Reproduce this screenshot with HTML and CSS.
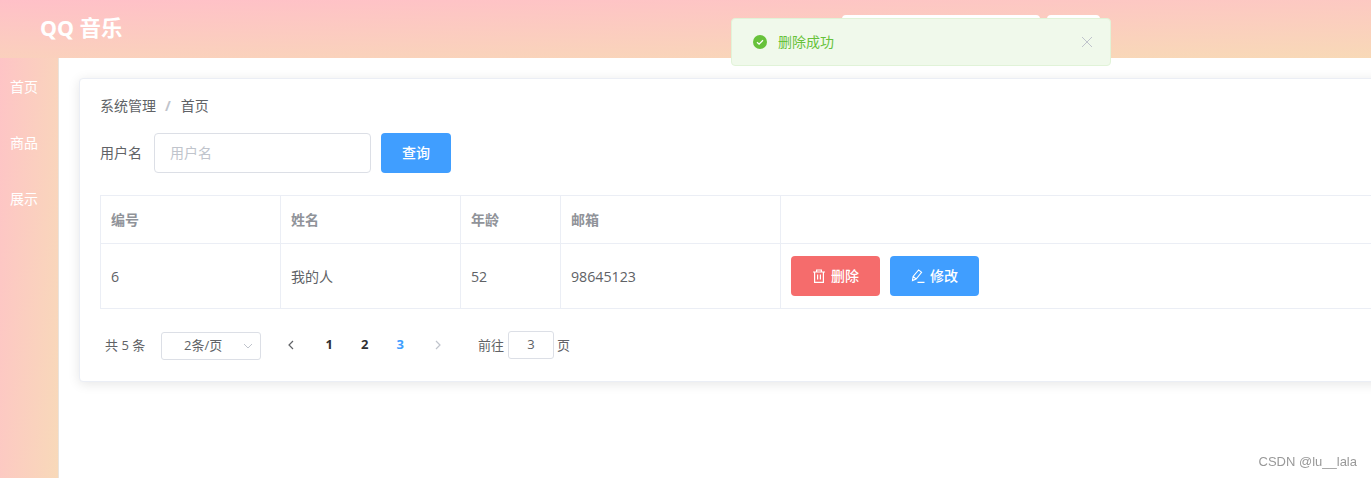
FILE: index.html
```html
<!DOCTYPE html>
<html lang="zh">
<head>
<meta charset="utf-8">
<title>QQ 音乐</title>
<link rel="stylesheet" href="styles.css">
</head>
<body>
<div class="app">
  <header class="header">
    <div class="logo">QQ 音乐</div>
    <div class="header-tools">
      <div class="search-box"></div>
      <div class="search-btn"></div>
    </div>
  </header>
  <div class="body">
    <aside class="sidebar">
      <a class="nav-item">首页</a>
      <a class="nav-item">商品</a>
      <a class="nav-item">展示</a>
    </aside>
    <main class="main">
      <section class="card">
        <nav class="breadcrumb"><span>系统管理</span><i class="sep">/</i><span>首页</span></nav>
        <form class="search-form">
          <label class="form-label">用户名</label>
          <div class="input"><span class="placeholder">用户名</span></div>
          <button type="button" class="btn btn-primary btn-query">查询</button>
        </form>
        <div class="table">
          <div class="row row-head">
            <div class="cell c1">编号</div>
            <div class="cell c2">姓名</div>
            <div class="cell c3">年龄</div>
            <div class="cell c4">邮箱</div>
            <div class="cell c5"></div>
          </div>
          <div class="row row-body">
            <div class="cell c1 num">6</div>
            <div class="cell c2">我的人</div>
            <div class="cell c3 num">52</div>
            <div class="cell c4 num">98645123</div>
            <div class="cell c5 actions">
              <button type="button" class="btn btn-danger btn-action">
                <svg class="icon" viewBox="0 0 14 14" fill="none" stroke="currentColor" stroke-width="1.2"><path d="M1 3h12M4.6 3V1h4.8v2M2.6 3v10.4h8.8V3M5.6 5.5v5M8.4 5.5v5"/></svg>
                <span>删除</span>
              </button>
              <button type="button" class="btn btn-primary btn-action">
                <svg class="icon" viewBox="0 0 14 14" fill="none" stroke="currentColor" stroke-width="1.1"><path d="M1.5 11.5l.6-4L7.6.9l3 2.5-5.5 6.6zM2.1 7.5l3 2.5M6.5 13.4h7"/></svg>
                <span>修改</span>
              </button>
            </div>
          </div>
        </div>
        <div class="pagination">
          <span class="total">共 5 条</span>
          <div class="page-size"><span class="size-text">2条/页</span>
            <svg class="chev-down" viewBox="0 0 12 12" fill="none" stroke="currentColor" stroke-width="1"><path d="M2 4l4 4 4-4"/></svg>
          </div>
          <svg class="pager-arrow prev" viewBox="0 0 12 12" fill="none" stroke="currentColor" stroke-width="1.2"><path d="M8 2L4 6l4 4"/></svg>
          <ul class="pager">
            <li>1</li>
            <li>2</li>
            <li class="active">3</li>
          </ul>
          <svg class="pager-arrow next" viewBox="0 0 12 12" fill="none" stroke="currentColor" stroke-width="1.2"><path d="M4 2l4 4-4 4"/></svg>
          <span class="jump">前往</span>
          <div class="jump-input">3</div>
          <span class="jump-end">页</span>
        </div>
      </section>
    </main>
  </div>
</div>
<div class="message">
  <svg class="msg-icon" viewBox="0 0 16 16"><circle cx="8" cy="8" r="7" fill="#67c23a"/><path d="M5 8.2l2.1 2 3.9-4" fill="none" stroke="#fff" stroke-width="1.3"/></svg>
  <span class="msg-text">删除成功</span>
  <svg class="msg-close" viewBox="0 0 12 12" fill="none" stroke="currentColor" stroke-width="1"><path d="M1 1l10 10M11 1L1 11"/></svg>
</div>
<div class="watermark">CSDN @lu__lala</div>
</body>
</html>
```

FILE: styles.css
```css
* { box-sizing: border-box; }
html, body { margin: 0; height: 100%; overflow: hidden; background: #fff; }
body { font-family: "Open Sans", "Noto Sans CJK SC", sans-serif; font-size: 14px; color: #606266; }
.app { width: 1371px; height: 478px; display: flex; flex-direction: column; }
.header { height: 58px; flex: none; display: flex; justify-content: space-between; background: linear-gradient(178.7deg, #ffc0c8, #f8d9b7); padding: 0 271px 0 40px; }
.logo { color: #fff; font-size: 21.5px; font-weight: 700; line-height: 56px; font-family: "Noto Sans", "Noto Sans CJK SC", sans-serif; }
.header-tools { display: flex; gap: 7px; padding-top: 15px; }
.search-box { width: 198px; height: 40px; background: #fff; border-radius: 4px; }
.search-btn { width: 53px; height: 40px; background: #fff; border-radius: 4px; }
.body { flex: 1; display: flex; min-height: 0; }
.sidebar { width: 59px; flex: none; padding-top: 1px; background: linear-gradient(93deg, #fec4c6, #f8d9b9); border-right: 1px solid #e9e3dd; }
.nav-item { display: block; height: 56px; line-height: 56px; padding-left: 10px; color: #fff; font-size: 14px; }
.main { flex: 1; min-width: 0; padding: 20px; overflow: hidden; }
.card { width: 1340px; height: 304px; background: #fff; border: 1px solid #ebeef5; border-radius: 4px; box-shadow: 0 2px 12px rgba(0,0,0,.1); padding: 20px; }
.breadcrumb { height: 14px; line-height: 14px; display: flex; color: #606266; }
.sep { font-style: normal; font-weight: 700; color: #c0c4cc; margin: 0 10px 0 9px; }
.search-form { display: flex; align-items: center; margin-top: 20px; }
.form-label { width: 54px; flex: none; color: #606266; padding-bottom: 2px; }
.input { width: 217px; height: 40px; border: 1px solid #dcdfe6; border-radius: 4px; padding: 0 15px; line-height: 37px; }
.placeholder { color: #c0c4cc; }
.btn { border: 0; border-radius: 4px; color: #fff; font: inherit; font-weight: 500; display: inline-flex; align-items: center; justify-content: center; padding: 0 0 2px; }
.btn-primary { background: #409eff; }
.btn-danger { background: #f56c6c; }
.btn-query { width: 70px; height: 40px; margin-left: 10px; }
.table { margin-top: 22px; width: 1300px; border: solid #ebeef5; border-width: 1px 0 0 1px; }
.row { display: flex; border-bottom: 1px solid #ebeef5; }
.row-head { height: 48px; font-weight: 700; color: #909399; }
.row-head .cell { padding-bottom: 2px; }
.row-body { height: 65px; }
.cell { display: flex; align-items: center; padding: 0 10px; border-right: 1px solid #ebeef5; }
.c1, .c2 { width: 180px; }
.c3 { width: 100px; }
.c4 { width: 220px; }
.c5 { flex: 1; }
.num { font-size: 14.2px; }
.actions { gap: 10px; }
.btn-action { width: 89px; height: 40px; gap: 5px; }
.btn-action .icon { margin-top: 2px; }
.icon { width: 14px; height: 14px; }
.pagination { display: flex; align-items: center; height: 28px; margin-top: 23px; padding-left: 5px; font-size: 13px; }
.total { width: 56px; flex: none; padding-bottom: 4px; }
.page-size { width: 100px; height: 28px; border: 1px solid #dcdfe6; border-radius: 3px; display: flex; align-items: center; justify-content: space-between; padding: 0 6px 0 22px; }
.size-text { padding-bottom: 4px; }
.chev-down { width: 12px; height: 12px; color: #c0c4cc; }
.pager-arrow { width: 12px; height: 12px; flex: none; margin-bottom: 2px; }
.prev { margin-left: 24px; color: #606266; }
.next { margin-left: 14px; color: #c0c4cc; }
.pager { list-style: none; margin: 0 0 0 14.5px; padding: 0 0 4px; display: flex; font-weight: 700; color: #303133; }
.pager li { width: 35.5px; text-align: center; }
.active { color: #409eff; }
.jump { margin-left: 34px; padding-bottom: 4px; }
.jump-input { width: 46px; height: 28px; margin: 0 0 2px 4px; border: 1px solid #dcdfe6; border-radius: 3px; text-align: center; line-height: 24px; }
.jump-end { margin-left: 3px; padding-bottom: 4px; }
.message { position: fixed; left: 731px; top: 18px; width: 380px; height: 48px; background: #f0f9eb; border: 1px solid #e1f3d8; border-radius: 4px; display: flex; align-items: center; padding: 0 17px 0 20px; }
.msg-icon { width: 16px; height: 16px; flex: none; }
.msg-text { margin-left: 10px; color: #67c23a; flex: 1; padding-bottom: 2px; }
.msg-close { width: 12px; height: 12px; color: #c0c4cc; }
.watermark { position: fixed; right: 14px; top: 454px; font-family: "Liberation Sans", sans-serif; font-size: 13px; line-height: 16px; color: #999; }
```
